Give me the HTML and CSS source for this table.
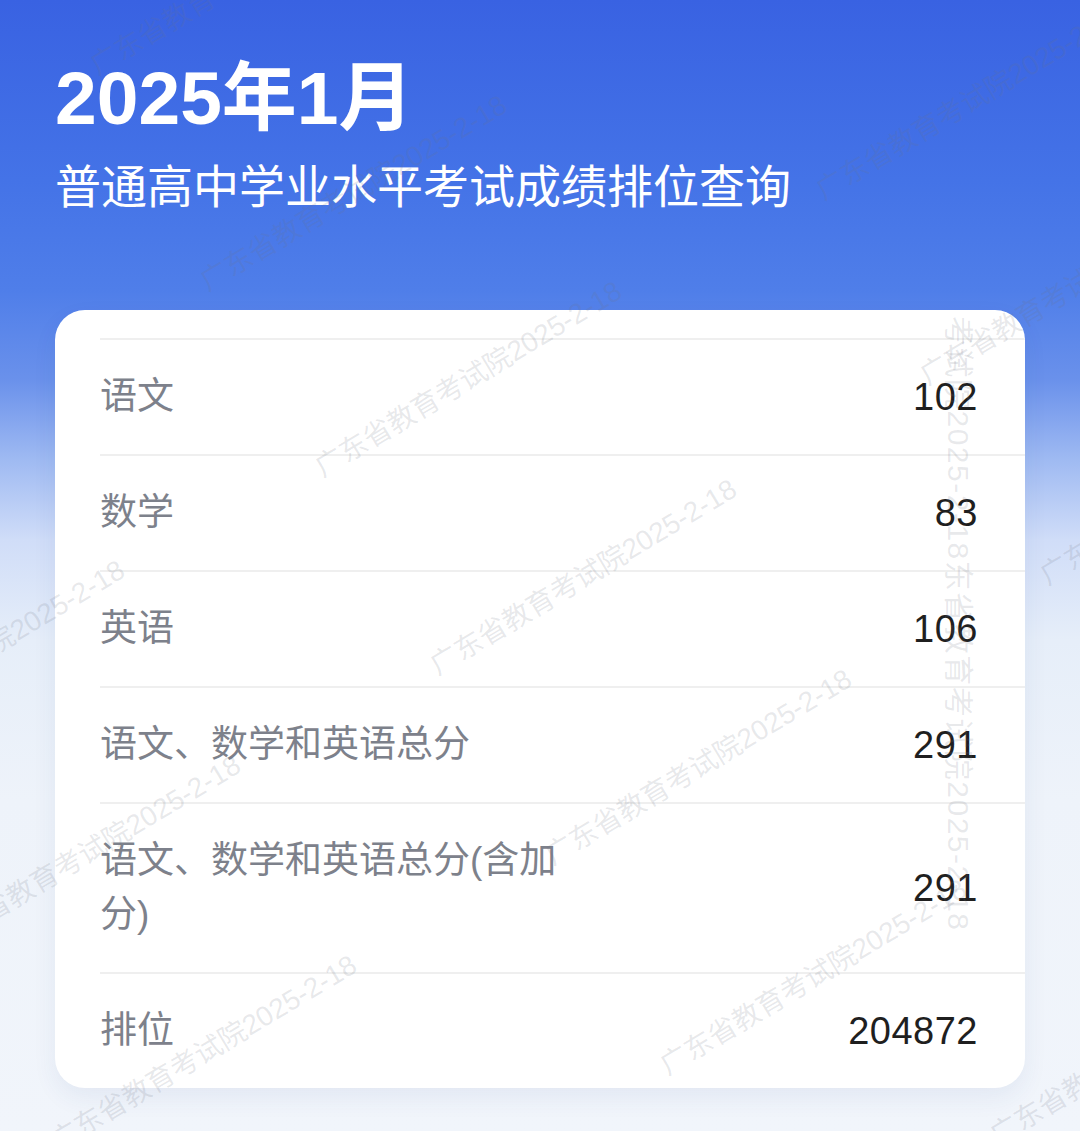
FILE: index.html
```html
<!DOCTYPE html>
<html lang="zh-CN">
<head>
<meta charset="utf-8">
<title>2025年1月 普通高中学业水平考试成绩排位查询</title>
<link rel="stylesheet" href="styles.css">
</head>
<body>
<div class="page">
  <header class="hero">
    <h1 class="title">2025年1月</h1>
    <p class="subtitle">普通高中学业水平考试成绩排位查询</p>
  </header>
  <section class="card">
    <div class="row"><span class="label">语文</span><span class="value">102</span></div>
    <div class="row"><span class="label">数学</span><span class="value">83</span></div>
    <div class="row"><span class="label">英语</span><span class="value">106</span></div>
    <div class="row"><span class="label">语文、数学和英语总分</span><span class="value">291</span></div>
    <div class="row"><span class="label">语文、数学和英语总分(含加分)</span><span class="value">291</span></div>
    <div class="row"><span class="label">排位</span><span class="value">204872</span></div>
  </section>
  <div class="watermarks" aria-hidden="true">
    <span class="wm" style="left:100px;top:52px">广东省教育考试院2025-2-18</span>
    <span class="wm" style="left:210px;top:268px">广东省教育考试院2025-2-18</span>
    <span class="wm" style="left:826px;top:177px">广东省教育考试院2025-2-18</span>
    <span class="wm" style="left:325px;top:454px">广东省教育考试院2025-2-18</span>
    <span class="wm" style="left:440px;top:652px">广东省教育考试院2025-2-18</span>
    <span class="wm" style="left:555px;top:842px">广东省教育考试院2025-2-18</span>
    <span class="wm" style="left:670px;top:1052px">广东省教育考试院2025-2-18</span>
    <span class="wm" style="left:-172px;top:733px">广东省教育考试院2025-2-18</span>
    <span class="wm" style="left:-56px;top:928px">广东省教育考试院2025-2-18</span>
    <span class="wm" style="left:60px;top:1128px">广东省教育考试院2025-2-18</span>
    <span class="wm" style="left:930px;top:362px">广东省教育考试院2025-2-18</span>
    <span class="wm" style="left:1050px;top:562px">广东省教育考试院2025-2-18</span>
    <span class="wm" style="left:1000px;top:1122px">广东省教育考试院2025-2-18</span>
    <span class="wm wm-v" style="left:942px;top:316px">考试院2025-2-18东省教育考试院2025-2-18</span>
  </div>
</div>
</body>
</html>
```

FILE: styles.css
```css
html, body {
  margin: 0;
  padding: 0;
}

body {
  width: 1080px;
  min-height: 1131px;
  overflow: hidden;
  font-family: "Liberation Sans", "Noto Sans CJK SC", sans-serif;
  background:
    linear-gradient(180deg,
      #3962e2 0px,
      #4473e7 180px,
      #4f7ee9 290px,
      #6a91eb 380px,
      #9fbaf2 460px,
      #d0ddf8 540px,
      #e6eef9 640px,
      #eef3fa 800px,
      #f1f5fb 1131px);
}

.page {
  position: relative;
  min-height: 1131px;
  padding: 53px 55px 0;
  box-sizing: border-box;
}

.hero {
  display: flex;
  flex-direction: column;
}

.title {
  margin: 0;
  font-size: 75px;
  line-height: 90px;
  font-weight: 700;
  color: #ffffff;
}

.subtitle {
  margin: 10px 0 0;
  font-family: "Noto Sans CJK SC", sans-serif;
  font-size: 46px;
  line-height: 60px;
  font-weight: 400;
  color: #ffffff;
}

.card {
  margin-top: 97px;
  background: #ffffff;
  border-radius: 30px;
  padding-top: 28px;
  display: flex;
  flex-direction: column;
  box-shadow: 0 10px 24px rgba(40, 70, 140, 0.07);
}

.row {
  display: flex;
  align-items: center;
  justify-content: space-between;
  margin-left: 45px;
  padding: 30px 47px 30px 0;
  border-top: 2px solid #efefef;
}

.label {
  max-width: 470px;
  font-family: "Liberation Sans", "Noto Sans CJK SC", sans-serif;
  font-size: 37px;
  line-height: 54px;
  color: #7d818b;
}

.value {
  font-family: "Liberation Sans", sans-serif;
  font-size: 38px;
  line-height: 54px;
  letter-spacing: 0.5px;
  color: #1f1f1f;
}

.watermarks {
  position: absolute;
  inset: 0;
  overflow: hidden;
  pointer-events: none;
}

.wm {
  position: absolute;
  font-family: "Liberation Sans", "Noto Sans CJK SC", sans-serif;
  font-size: 28px;
  line-height: 28px;
  white-space: nowrap;
  color: rgba(110, 115, 130, 0.16);
  transform-origin: 0 100%;
  transform: rotate(-31deg);
}

.wm-v {
  font-size: 30px;
  letter-spacing: 1.5px;
  transform-origin: 0 0;
  transform: translateX(30px) rotate(90deg);
}
```
